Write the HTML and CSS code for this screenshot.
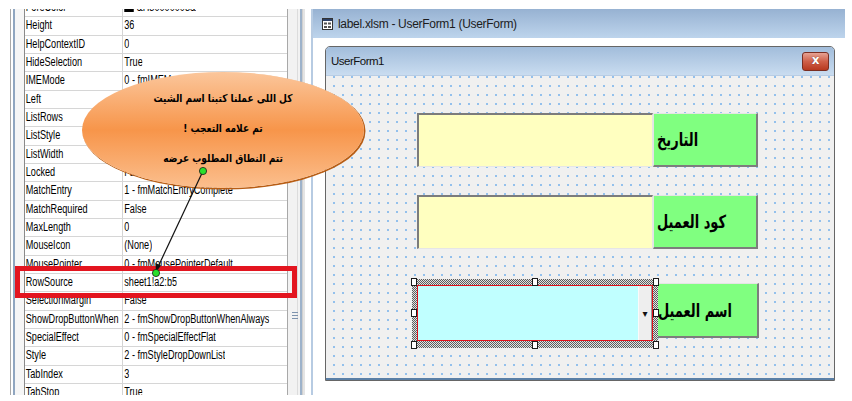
FILE: index.html
```html
<html>
    <head>
        <title>
            UserForm RowSource
        </title>
        <link rel="stylesheet" href="styles.css">
    </head>
    <body>
        <div class="screen">
            <div class="props">
                <div class="props-edge"></div>
                <div class="grid-wrap">
                    <div class="grid">
                        <div class="row"><span class="name">ForeColor</span><span class="val"><i class="swatch"></i>&amp;H80000008&amp;</span></div>
                        <div class="row"><span class="name">Height</span><span class="val">36</span></div>
                        <div class="row"><span class="name">HelpContextID</span><span class="val">0</span></div>
                        <div class="row"><span class="name">HideSelection</span><span class="val">True</span></div>
                        <div class="row"><span class="name">IMEMode</span><span class="val">0 - fmIMEModeNoControl</span></div>
                        <div class="row"><span class="name">Left</span><span class="val">84</span></div>
                        <div class="row"><span class="name">ListRows</span><span class="val">8</span></div>
                        <div class="row"><span class="name">ListStyle</span><span class="val">0 - fmListStylePlain</span></div>
                        <div class="row"><span class="name">ListWidth</span><span class="val">0 pt</span></div>
                        <div class="row"><span class="name">Locked</span><span class="val">False</span></div>
                        <div class="row"><span class="name">MatchEntry</span><span class="val">1 - fmMatchEntryComplete</span></div>
                        <div class="row"><span class="name">MatchRequired</span><span class="val">False</span></div>
                        <div class="row"><span class="name">MaxLength</span><span class="val">0</span></div>
                        <div class="row"><span class="name">MouseIcon</span><span class="val">(None)</span></div>
                        <div class="row"><span class="name">MousePointer</span><span class="val">0 - fmMousePointerDefault</span></div>
                        <div class="row"><span class="name">RowSource</span><span class="val">sheet1!a2:b5</span></div>
                        <div class="row"><span class="name">SelectionMargin</span><span class="val">False</span></div>
                        <div class="row"><span class="name">ShowDropButtonWhen</span><span class="val">2 - fmShowDropButtonWhenAlways</span></div>
                        <div class="row"><span class="name">SpecialEffect</span><span class="val">0 - fmSpecialEffectFlat</span></div>
                        <div class="row"><span class="name">Style</span><span class="val">2 - fmStyleDropDownList</span></div>
                        <div class="row"><span class="name">TabIndex</span><span class="val">3</span></div>
                        <div class="row"><span class="name">TabStop</span><span class="val">True</span></div>
                    </div>
                </div>
                <div class="scroll"><div class="grip"></div></div>
                <div class="props-gap"></div>
            </div>
            <div class="codewin">
                <div class="codewin-title">
                    <svg class="win-icon" width="11" height="12" viewBox="0 0 11 12">
                        <rect x="0.5" y="0.5" width="10" height="11" fill="#fff" stroke="#333"/>
                        <rect x="1" y="1" width="9" height="2" fill="#2a3f66"/>
                        <rect x="2" y="4.5" width="3" height="2" fill="#555"/>
                        <rect x="6" y="4.5" width="3" height="2" fill="#555"/>
                        <rect x="2" y="8" width="3" height="2" fill="#555"/>
                        <rect x="6" y="8" width="3" height="2" fill="#555"/>
                    </svg>
                    <span>label.xlsm - UserForm1 (UserForm)</span>
                </div>
                <div class="codewin-body">
                    <div class="uf">
                        <div class="uf-title">
                            <span>UserForm1</span>
                            <span class="close">x</span>
                        </div>
                        <div class="uf-body">
                            <div class="ctl-row">
                                <div class="textbox"></div>
                                <div class="label"><span class="ar">التاريخ</span></div>
                            </div>
                            <div class="ctl-row second">
                                <div class="textbox"></div>
                                <div class="label"><span class="ar">كود العميل</span></div>
                            </div>
                            <div class="ctl-row third">
                                <div class="selection">
                                    <div class="combo">
                                        <div class="combo-text"></div>
                                        <div class="drop">&#9662;</div>
                                    </div>
                                    <i class="handle h-tl"></i>
                                    <i class="handle h-tc"></i>
                                    <i class="handle h-tr"></i>
                                    <i class="handle h-ml"></i>
                                    <i class="handle h-mr"></i>
                                    <i class="handle h-bl"></i>
                                    <i class="handle h-bc"></i>
                                    <i class="handle h-br"></i>
                                </div>
                                <div class="label combo-label"><span class="ar">اسم العميل</span></div>
                            </div>
                        </div>
                    </div>
                </div>
            </div>
        </div>

        <div class="callout">
            <p>كل اللى عملنا كتبنا اسم الشيت</p>
            <p>تم علامه التعجب !</p>
            <p>تتم النطاق المطلوب عرضه</p>
        </div>
        <div class="redbox"></div>
        <svg class="pointer" width="852" height="401" viewBox="0 0 852 401">
            <line x1="203" y1="171" x2="157.5" y2="268" stroke="#111" stroke-width="1.2"/>
            <polygon points="156,272 155.5,263 161,265.5" fill="#111"/>
            <circle cx="203" cy="171" r="3.6" fill="#29e02b" stroke="#1a1a1a" stroke-width="0.8"/>
            <circle cx="156" cy="273" r="3.6" fill="#29e02b" stroke="#1a1a1a" stroke-width="0.8"/>
        </svg>
    </body>
</html>
```

FILE: styles.css
```css
body {
    margin: 0;
    padding: 0;
    background-color: #fff;
    font-family: "Liberation Sans", Arial, sans-serif;
    position: relative;
    width: 852px;
    height: 401px;
    overflow: hidden;
}
.screen {
    display: flex;
    padding-top: 9px;
    height: 386px;
}

/* properties window */
.props {
    display: flex;
    width: 311px;
    height: 386px;
    overflow: hidden;
}
.props-edge {
    width: 24px;
    background: linear-gradient(to right, #fff 0 10px, #a9a9a9 10px 11px, #fff 11px 13px, #90a6c0 13px 15px, #f6f6f6 15px 24px);
}
.grid-wrap {
    width: 263px;
    border-left: 1px solid #8a8a8a;
    border-right: 1px solid #a8a8a8;
    background-color: #fff;
    overflow: hidden;
}
.grid {
    width: 361px;
    margin-top: -10px;
    transform: scaleX(0.73);
    transform-origin: left top;
}
.row {
    display: flex;
    box-sizing: border-box;
    height: 18.33px;
    border-bottom: 1px solid #d6d6d6;
    font-size: 12.5px;
    line-height: 17px;
    color: #000;
    white-space: nowrap;
}
.name {
    width: 134px;
    padding-left: 1px;
    box-sizing: border-box;
    border-right: 1px solid #c4c4c4;
    overflow: hidden;
}
.val {
    padding-left: 2px;
    overflow: hidden;
}
.swatch {
    display: inline-block;
    width: 13px;
    height: 9px;
    background-color: #000;
    margin-right: 4px;
    vertical-align: -1px;
}
.scroll {
    width: 12px;
    background: linear-gradient(to right, #f2f2f2 0 9px, #dcdcdc 9px 10px, #f2f2f2 10px);
    position: relative;
}
.grip {
    position: absolute;
    left: 4px;
    top: 303px;
    width: 6px;
    height: 7px;
    background: repeating-linear-gradient(#7d93ad 0 1px, transparent 1px 3px);
}
.props-gap {
    width: 11px;
    background: linear-gradient(to right, #9db2ca 0 2px, #cfcfcf 2px 3px, #e4e4e4 3px 5px, #fff 5px);
}

/* code window */
.codewin {
    width: 532px;
    border-left: 2px solid #b7cbe2;
    display: flex;
    flex-direction: column;
}
.codewin-title {
    height: 29px;
    display: flex;
    align-items: center;
    padding-left: 9px;
    background: linear-gradient(#97b2d2, #bdd4ec);
    font-size: 12px;
    letter-spacing: -0.3px;
    color: #1c1c1c;
}
.win-icon {
    margin-right: 5px;
}
.codewin-body {
    flex: 1;
    background-color: #fff;
    padding: 8px 0 0 12px;
}
.uf {
    width: 508px;
    border: 1px solid #666;
    border-radius: 5px 5px 0 0;
    box-shadow: inset 0 0 0 1px #dfe9f5;
}
.uf-title {
    height: 28px;
    display: flex;
    align-items: center;
    justify-content: space-between;
    padding: 0 5px 0 5px;
    border-radius: 4px 4px 0 0;
    background: linear-gradient(#a2bddb, #c9dcf0);
    font-size: 11.5px;
    letter-spacing: -0.5px;
    color: #111;
}
.close {
    width: 25px;
    height: 17px;
    border: 1px solid #7a2e22;
    border-radius: 3px;
    background: linear-gradient(#e6a293, #cf5f48 50%, #b7391f);
    color: #fff;
    font-family: "DejaVu Sans", sans-serif;
    font-weight: bold;
    font-size: 12px;
    letter-spacing: 0;
    line-height: 15px;
    text-align: center;
    text-shadow: 0 0 1px #5a1a10;
}
.uf-body {
    height: 305px;
    box-sizing: border-box;
    padding: 37px 0 0 91px;
    border-top: 1px solid #b9cde4;
    border-bottom: 2px solid #5a7fa6;
    background-color: #f0f0f0;
    background-image: radial-gradient(circle at 1px 1px, #93c0ec 0.8px, transparent 1.1px);
    background-size: 9px 9px;
    background-position: 7px 0px;
}

/* controls */
.ctl-row {
    display: flex;
    height: 54px;
}
.ctl-row.second {
    margin-top: 28px;
}
.ctl-row.third {
    margin-top: 30px;
    height: 69px;
}
.textbox {
    width: 236px;
    box-sizing: border-box;
    background-color: #ffffc0;
    border-top: 2px solid #7c7c7c;
    border-left: 2px solid #7c7c7c;
    border-right: 1px solid #e6e6e6;
    border-bottom: 1px solid #e6e6e6;
}
.label {
    width: 105px;
    box-sizing: border-box;
    background-color: #80ff80;
    border-top: 1px solid #e4e4e4;
    border-left: 1px solid #e4e4e4;
    border-right: 2px solid #7d7d7d;
    border-bottom: 2px solid #7d7d7d;
    direction: rtl;
    display: flex;
    align-items: center;
    justify-content: flex-end;
    padding-left: 3px;
    white-space: nowrap;
    font-family: "DejaVu Sans", sans-serif;
    font-weight: bold;
    font-size: 18px;
    color: #000;
}
.ar {
    transform: scaleX(0.72);
    transform-origin: left center;
}
.selection {
    position: relative;
    z-index: 1;
    width: 246px;
    height: 69px;
    box-sizing: border-box;
    margin-left: -5px;
    padding: 6px 5px 7px 5px;
    background: repeating-conic-gradient(#5c5c5c 0 25%, #e2e2e2 0 50%) 0 0 / 2px 2px;
}
.combo {
    display: flex;
    height: 56px;
    box-sizing: border-box;
    border: 1px solid #e0101a;
    background-color: #c0ffff;
}
.combo-text {
    flex: 1;
}
.drop {
    width: 14px;
    box-sizing: border-box;
    background-color: #eeeeee;
    border-left: 1px solid #fafafa;
    border-right: 1px solid #9a9a9a;
    font-family: "DejaVu Sans", sans-serif;
    font-size: 10px;
    color: #111;
    display: flex;
    align-items: center;
    justify-content: center;
}
.handle {
    position: absolute;
    width: 6px;
    height: 8px;
    box-sizing: border-box;
    background-color: #fff;
    border: 1px solid #1a1a1a;
}
.h-tl { left: -1px; top: -1px; }
.h-tc { left: 120px; top: -1px; }
.h-tr { right: -1px; top: -1px; }
.h-ml { left: -1px; top: 30px; }
.h-mr { right: -1px; top: 30px; }
.h-bl { left: -1px; bottom: -1px; }
.h-bc { left: 120px; bottom: -1px; }
.h-br { right: -1px; bottom: -1px; }
.combo-label {
    margin-left: -4px;
    margin-top: 4px;
    height: 55px;
}

/* annotation */
.callout {
    position: absolute;
    left: 82px;
    top: 72px;
    width: 282px;
    height: 116px;
    box-sizing: border-box;
    border-radius: 50%;
    padding-top: 12px;
    background: linear-gradient(#fbc69b, #f7954a 50%, #fbbf8e);
    box-shadow: 1px 1px 0 0.5px #b85d14;
    direction: rtl;
    text-align: center;
    font-family: "DejaVu Sans", sans-serif;
    font-weight: bold;
    font-size: 11px;
    color: #000;
}
.callout p {
    margin: 0;
    line-height: 30px;
    transform: scaleX(0.82);
}
.redbox {
    position: absolute;
    left: 15px;
    top: 266px;
    width: 282px;
    height: 32px;
    box-sizing: border-box;
    border: 5px solid #e3151f;
}
.pointer {
    position: absolute;
    left: 0;
    top: 0;
}
```
